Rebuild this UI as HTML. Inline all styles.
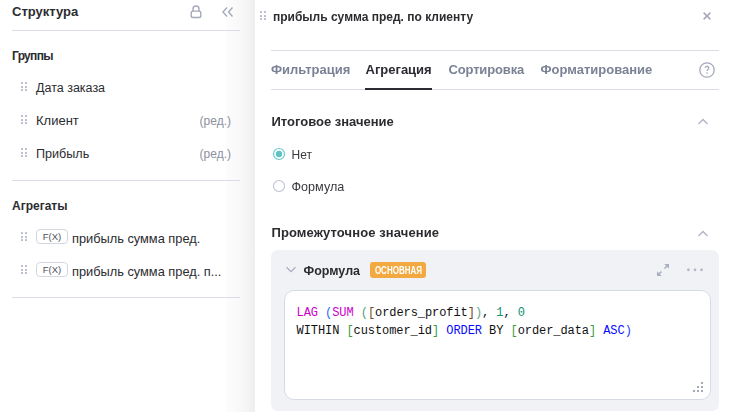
<!DOCTYPE html>
<html><head><meta charset="utf-8">
<style>
*{margin:0;padding:0;box-sizing:border-box}
html,body{width:729px;height:412px;overflow:hidden;background:#fff}
body{position:relative;font-family:"Liberation Sans",sans-serif;color:#2b2c30}
.a{position:absolute;white-space:nowrap}
.t13{font-size:13px;line-height:13px}
.t12{font-size:12px;line-height:12px}
.b{font-weight:700}
.hr{position:absolute;height:1px;background:#d9dde6}
.shadow{position:absolute;left:226px;top:0;width:29px;height:412px;
 background:linear-gradient(to right,rgba(0,0,0,.01) 0%,rgba(0,0,0,.018) 30%,rgba(0,0,0,.03) 60%,rgba(0,0,0,.05) 85%,rgba(0,0,0,.068) 100%)}
.drag{position:absolute;width:6px;height:9px}
.drag i{position:absolute;width:2px;height:2px;background:#b9bdcb;border-radius:.5px}
.gray{color:#8b90a0}
.tab{color:#7b8296}
.fx{position:absolute;width:32px;height:15px;border:1px solid #d3d7e0;border-radius:4px;font-size:9.5px;line-height:14px;text-align:center;color:#4c505b}
</style></head><body>

<!-- sidebar -->
<div class="shadow"></div>
<div class="a t13 b" style="left:12px;top:5px">Структура</div>
<svg class="a" style="left:188px;top:1px" width="16" height="18" viewBox="0 0 16 18">
 <path d="M5 10.5V8a3 3 0 0 1 6 0v2.5" fill="none" stroke="#a4a9bb" stroke-width="1.4"/>
 <rect x="3.2" y="10.1" width="9.6" height="6.4" rx="1.8" fill="none" stroke="#a4a9bb" stroke-width="1.4"/>
</svg>
<svg class="a" style="left:220px;top:5px" width="16" height="14" viewBox="0 0 16 14">
 <path d="M7 2.5L3 7l4 4.5M12.5 2.5L8.5 7l4 4.5" fill="none" stroke="#a4a9bb" stroke-width="1.4"/>
</svg>
<div class="hr" style="left:12px;top:30px;width:228px"></div>

<div class="a t12 b" style="left:12px;top:50px;letter-spacing:-.7px">Группы</div>

<div class="drag" style="left:21px;top:82px"><i style="left:0;top:0"></i><i style="left:4px;top:0"></i><i style="left:0;top:3.5px"></i><i style="left:4px;top:3.5px"></i><i style="left:0;top:7px"></i><i style="left:4px;top:7px"></i></div>
<div class="a t12" style="left:36px;top:81.5px;font-size:12.5px">Дата заказа</div>

<div class="drag" style="left:21px;top:115px"><i style="left:0;top:0"></i><i style="left:4px;top:0"></i><i style="left:0;top:3.5px"></i><i style="left:4px;top:3.5px"></i><i style="left:0;top:7px"></i><i style="left:4px;top:7px"></i></div>
<div class="a t12" style="left:36px;top:114.5px;font-size:13px">Клиент</div>
<div class="a t12 gray" style="right:498px;top:114.5px;font-size:12px">(ред.)</div>

<div class="drag" style="left:21px;top:148px"><i style="left:0;top:0"></i><i style="left:4px;top:0"></i><i style="left:0;top:3.5px"></i><i style="left:4px;top:3.5px"></i><i style="left:0;top:7px"></i><i style="left:4px;top:7px"></i></div>
<div class="a t12" style="left:36px;top:147.5px;font-size:12.6px">Прибыль</div>
<div class="a t12 gray" style="right:498px;top:147.5px;font-size:12px">(ред.)</div>

<div class="hr" style="left:12px;top:180px;width:228px"></div>
<div class="a t12 b" style="left:12px;top:200px">Агрегаты</div>

<div class="drag" style="left:21px;top:232px"><i style="left:0;top:0"></i><i style="left:4px;top:0"></i><i style="left:0;top:3.5px"></i><i style="left:4px;top:3.5px"></i><i style="left:0;top:7px"></i><i style="left:4px;top:7px"></i></div>
<div class="fx" style="left:36px;top:229px">F(X)</div>
<div class="a t12" style="left:72px;top:232.5px;font-size:12.8px">прибыль сумма пред.</div>

<div class="drag" style="left:21px;top:265px"><i style="left:0;top:0"></i><i style="left:4px;top:0"></i><i style="left:0;top:3.5px"></i><i style="left:4px;top:3.5px"></i><i style="left:0;top:7px"></i><i style="left:4px;top:7px"></i></div>
<div class="fx" style="left:36px;top:262px">F(X)</div>
<div class="a t12" style="left:72px;top:265.5px;font-size:12.8px">прибыль сумма пред. п...</div>

<div class="hr" style="left:12px;top:297px;width:228px"></div>

<!-- right panel -->
<div class="gs" style="position:absolute;left:0;top:0;width:729px;height:412px;will-change:transform">
<div class="drag" style="left:260px;top:11px"><i style="left:0;top:0"></i><i style="left:4px;top:0"></i><i style="left:0;top:3.5px"></i><i style="left:4px;top:3.5px"></i><i style="left:0;top:7px"></i><i style="left:4px;top:7px"></i></div>
<div class="a t12 b" style="left:273px;top:11.3px">прибыль сумма пред. по клиенту</div>
<svg class="a" style="left:701px;top:10px" width="12" height="12" viewBox="0 0 12 12">
 <path d="M2.6 2.6l6.8 6.8M9.4 2.6l-6.8 6.8" stroke="#a4a9bb" stroke-width="1.5"/>
</svg>
<div class="hr" style="left:271px;top:50px;width:448px"></div>

<div class="a t13 b tab" style="left:271px;top:62.5px">Фильтрация</div>
<div class="a t13 b" style="left:365.5px;top:62.5px;color:#2a2b33">Агрегация</div>
<div class="a t13 b tab" style="left:448.5px;top:62.5px;letter-spacing:-.15px">Сортировка</div>
<div class="a t13 b tab" style="left:540.5px;top:62.5px">Форматирование</div>
<svg class="a" style="left:698px;top:61px" width="18" height="18" viewBox="0 0 18 18">
 <circle cx="9" cy="9" r="7.2" fill="none" stroke="#a4a9bb" stroke-width="1.3"/>
 <path d="M7.2 7.1a1.8 1.8 0 1 1 2.6 1.6c-.5.3-.8.6-.8 1.2" fill="none" stroke="#a4a9bb" stroke-width="1.3"/>
 <circle cx="9" cy="12.1" r=".8" fill="#a4a9bb"/>
</svg>
<div class="hr" style="left:271px;top:89px;width:448px"></div>
<div class="a" style="left:365px;top:88px;width:67px;height:2px;background:#2a2b33"></div>

<div class="a t13 b" style="left:271.5px;top:114.6px">Итоговое значение</div>
<svg class="a" style="left:696px;top:116px" width="14" height="10" viewBox="0 0 14 10">
 <path d="M2.5 8l4.5-4.5L11.5 8" fill="none" stroke="#b0b5c6" stroke-width="1.4"/>
</svg>

<svg class="a" style="left:272px;top:147px" width="14" height="14" viewBox="0 0 14 14">
 <circle cx="7" cy="7" r="5.5" fill="none" stroke="#6cc9cc" stroke-width="1.2"/>
 <circle cx="7" cy="7" r="3.2" fill="#5fc3c6"/>
</svg>
<div class="a t12" style="left:291.5px;top:148.7px;color:#38393e">Нет</div>
<svg class="a" style="left:272px;top:179px" width="14" height="14" viewBox="0 0 14 14">
 <circle cx="7" cy="7" r="5.5" fill="none" stroke="#bfc3d1" stroke-width="1.1"/>
</svg>
<div class="a t12" style="left:291.5px;top:180.5px;font-size:12.6px;color:#38393e">Формула</div>

<div class="a t13 b" style="left:271.5px;top:226.3px;letter-spacing:.1px">Промежуточное значение</div>
<svg class="a" style="left:696px;top:228px" width="14" height="10" viewBox="0 0 14 10">
 <path d="M2.5 8l4.5-4.5L11.5 8" fill="none" stroke="#b0b5c6" stroke-width="1.4"/>
</svg>

<!-- card -->
<div class="a" style="left:271px;top:250px;width:448px;height:161px;background:#f1f2f6;border-radius:7px"></div>
<svg class="a" style="left:284px;top:264px" width="14" height="10" viewBox="0 0 14 10">
 <path d="M2.5 3.2l4.5 4.5 4.5-4.5" fill="none" stroke="#a9aec0" stroke-width="1.3"/>
</svg>
<div class="a t12 b" style="left:303.5px;top:265.2px;font-size:12.5px">Формула</div>
<div class="a" style="left:370px;top:262px;width:56px;height:16px;background:#f2a93f;border-radius:3px;color:#fff;font-size:10px;font-weight:700;line-height:16px;text-align:center"><span style="display:inline-block;transform:scaleX(.8);position:relative;top:.8px;left:-.8px">ОСНОВНАЯ</span></div>
<svg class="a" style="left:655px;top:262px" width="16" height="16" viewBox="0 0 16 16">
 <path d="M12.5 3.5L9.5 6.5M3.5 12.5L6.5 9.5" fill="none" stroke="#a9aec0" stroke-width="1.5"/>
 <path d="M14 2L9.3 2L14 6.7ZM2 14L6.7 14L2 9.3Z" fill="#a9aec0"/>
</svg>

<svg class="a" style="left:684px;top:266px" width="22" height="8" viewBox="0 0 22 8"><circle cx="4.4" cy="3.8" r="1.35" fill="#b0b4c4"/><circle cx="11" cy="3.8" r="1.35" fill="#b0b4c4"/><circle cx="17.5" cy="3.8" r="1.35" fill="#b0b4c4"/></svg>
</div>
<div class="a" style="left:283.5px;top:290px;width:427px;height:109.5px;background:#fff;border:1px solid #d6dae4;border-radius:10px"></div>
<div class="a" style="left:296.5px;top:303.8px;font-family:'Liberation Mono',monospace;font-size:12px;letter-spacing:-0.07px;line-height:18px;color:#111">
<span style="color:#cc00cc">LAG</span> <span style="color:#1e6cff">(</span><span style="color:#cc00cc">SUM</span> <span style="color:#4fa384">(</span><span style="color:#6e4a26">[</span>orders_profit<span style="color:#6e4a26">]</span><span style="color:#5aa88a">)</span>, <span style="color:#0f9070">1</span>, <span style="color:#0f9070">0</span><br>WITHIN <span style="color:#3c9c3c">[</span>customer_id<span style="color:#3c9c3c">]</span> <span style="color:#0a0aff">ORDER</span> BY <span style="color:#3c9c3c">[</span>order_data<span style="color:#3c9c3c">]</span> <span style="color:#0a0aff">ASC</span><span style="color:#1a3cff">)</span>
</div>
<div class="a" style="left:701px;top:382px;width:2px;height:2px;background:#a3a7b6"></div>
<div class="a" style="left:697px;top:386px;width:2px;height:2px;background:#a3a7b6"></div>
<div class="a" style="left:701px;top:386px;width:2px;height:2px;background:#a3a7b6"></div>
<div class="a" style="left:693px;top:390px;width:2px;height:2px;background:#a3a7b6"></div>
<div class="a" style="left:697px;top:390px;width:2px;height:2px;background:#a3a7b6"></div>
<div class="a" style="left:701px;top:390px;width:2px;height:2px;background:#a3a7b6"></div>

</body></html>
